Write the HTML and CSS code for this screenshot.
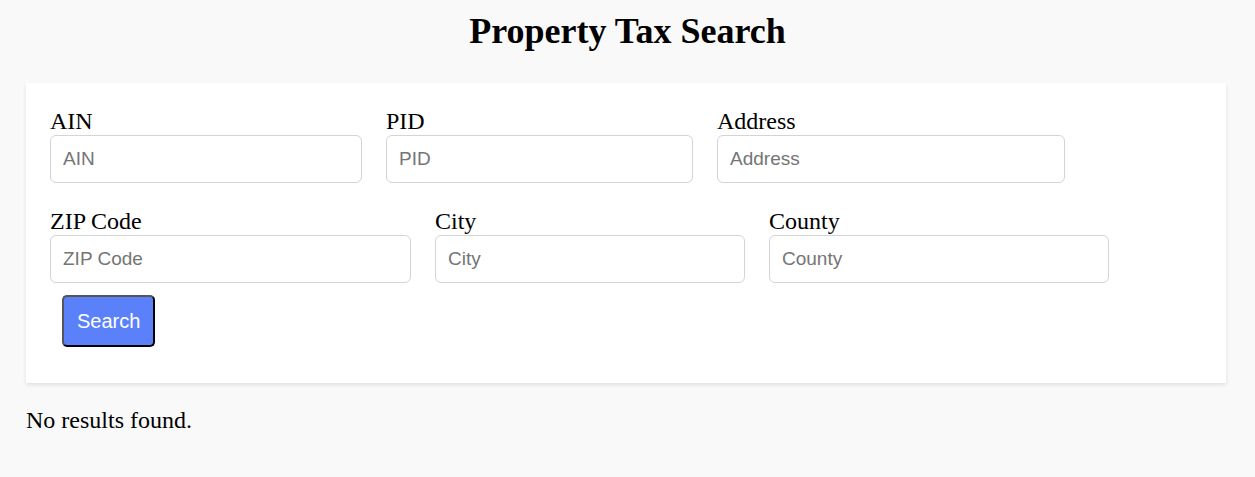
FILE: index.html
```html
<!DOCTYPE html>
<html lang="en">
<head>
<meta charset="utf-8">
<title>Property Tax Search</title>
<link rel="stylesheet" href="styles.css">
</head>
<body>
<div class="page">
  <h1 class="title">Property Tax Search</h1>
  <form class="card">
    <div class="fields">
      <div class="field w-ain">
        <label class="label" for="ain">AIN</label>
        <input class="input" id="ain" type="text" placeholder="AIN">
      </div>
      <div class="field w-pid">
        <label class="label" for="pid">PID</label>
        <input class="input" id="pid" type="text" placeholder="PID">
      </div>
      <div class="field w-address">
        <label class="label" for="address">Address</label>
        <input class="input" id="address" type="text" placeholder="Address">
      </div>
      <div class="field w-zip">
        <label class="label" for="zip">ZIP Code</label>
        <input class="input" id="zip" type="text" placeholder="ZIP Code">
      </div>
      <div class="field w-city">
        <label class="label" for="city">City</label>
        <input class="input" id="city" type="text" placeholder="City">
      </div>
      <div class="field w-county">
        <label class="label" for="county">County</label>
        <input class="input" id="county" type="text" placeholder="County">
      </div>
    </div>
    <div class="actions">
      <button class="button" type="button">Search</button>
    </div>
  </form>
  <p class="empty">No results found.</p>
</div>
</body>
</html>
```
FILE: styles.css
```css
html, body {
  margin: 0;
  padding: 0;
}

body {
  background: #f9f9f9;
  color: #000;
  font-family: "Liberation Serif", "Times New Roman", serif;
}

.page {
  padding: 0 26px;
}

.title {
  margin: 11px 0 31px;
  font-size: 36px;
  font-weight: bold;
  text-align: center;
  line-height: 41px;
}

.card {
  width: 1200px;
  box-sizing: border-box;
  background: #fff;
  padding: 12px;
  box-shadow: 0 2px 4px rgba(0, 0, 0, 0.1);
}

.fields {
  display: flex;
  flex-wrap: wrap;
}

.field {
  margin: 12px;
  display: flex;
  flex-direction: column;
}

.w-ain { width: 312px; }
.w-pid { width: 307px; }
.w-address { width: 348px; }
.w-zip { width: 361px; }
.w-city { width: 310px; }
.w-county { width: 340px; }

.label {
  display: block;
  font-size: 24px;
  line-height: 28px;
}

.input {
  box-sizing: border-box;
  width: 100%;
  height: 48px;
  margin: 0;
  padding: 0 12px;
  border: 1px solid #d3d3da;
  border-radius: 6px;
  background: #fff;
  font-family: "Liberation Sans", Arial, sans-serif;
  font-size: 19px;
  color: #000;
  outline: none;
}

.input::placeholder {
  color: #757575;
}

.actions {
  padding: 0 24px 24px;
}

.button {
  display: block;
  box-sizing: border-box;
  height: 52px;
  margin: 0;
  padding: 0 13px;
  border: 2px solid;
  border-color: #555 #000 #000 #555;
  border-radius: 5px;
  background: #5a81fa;
  color: #fff;
  font-family: "Liberation Sans", Arial, sans-serif;
  font-size: 20px;
  cursor: pointer;
}

.empty {
  margin: 24px 0 0;
  font-size: 24px;
}
```
